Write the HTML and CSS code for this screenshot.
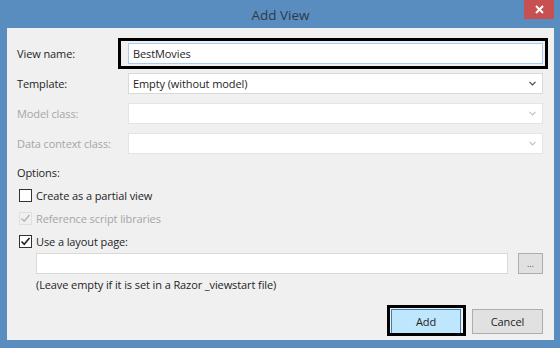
FILE: index.html
```html
<!DOCTYPE html>
<html lang="en">
  <head>
    <meta charset="UTF-8" />
    <title>Add View</title>
    <link rel="stylesheet" href="styles.css">
  </head>
  <body>
    <div class="window">
      <div class="titlebar">
        <span></span>
        <span class="title">Add View</span>
        <span class="close">
          <svg width="9" height="9" viewBox="0 0 9 9">
            <path d="M1 1 L8 8 M8 1 L1 8" stroke="#fff" stroke-width="2" />
          </svg>
        </span>
      </div>

      <div class="content">
        <!-- Main fields -->
        <div class="fields">
          <div class="label">View name:</div>
          <div class="textbox focused marked">BestMovies</div>

          <div class="label">Template:</div>
          <div class="select">
            <span>Empty (without model)</span>
            <svg class="chevron" width="7" height="5" viewBox="0 0 7 5">
              <path d="M0.5 0.8 L3.5 3.8 L6.5 0.8" fill="none" stroke="#444" stroke-width="1.2" />
            </svg>
          </div>

          <div class="label disabled">Model class:</div>
          <div class="select disabled">
            <span></span>
            <svg class="chevron" width="7" height="5" viewBox="0 0 7 5">
              <path d="M0.5 0.8 L3.5 3.8 L6.5 0.8" fill="none" stroke="#c2c2c2" stroke-width="1.2" />
            </svg>
          </div>

          <div class="label disabled">Data context class:</div>
          <div class="select disabled">
            <span></span>
            <svg class="chevron" width="7" height="5" viewBox="0 0 7 5">
              <path d="M0.5 0.8 L3.5 3.8 L6.5 0.8" fill="none" stroke="#c2c2c2" stroke-width="1.2" />
            </svg>
          </div>
        </div>

        <!-- Options -->
        <div class="options">
          <div class="heading">Options:</div>
          <div class="check">
            <span class="box"></span>
            <span>Create as a partial view</span>
          </div>
          <div class="check disabled">
            <span class="box">
              <svg width="11" height="11" viewBox="0 0 11 11">
                <path d="M1.5 5.5 L4.2 8.2 L9.5 2" fill="none" stroke="#b4b4b4" stroke-width="1.5" />
              </svg>
            </span>
            <span>Reference script libraries</span>
          </div>
          <div class="check">
            <span class="box">
              <svg width="11" height="11" viewBox="0 0 11 11">
                <path d="M1.5 5.5 L4.2 8.2 L9.5 2" fill="none" stroke="#222" stroke-width="1.6" />
              </svg>
            </span>
            <span>Use a layout page:</span>
          </div>
        </div>

        <div class="layout-row">
          <div class="textbox wide"></div>
          <div class="button browse">...</div>
        </div>
        <div class="hint">(Leave empty if it is set in a Razor _viewstart file)</div>

        <div class="actions">
          <div class="button primary marked">Add</div>
          <div class="button">Cancel</div>
        </div>
      </div>
    </div>
  </body>
</html>
```

FILE: styles.css
```css
body {
  margin: 0;
  font-family: "Open Sans", "Noto Sans", sans-serif;
  font-size: 11px;
  letter-spacing: -0.1px;
  color: #1e1e1e;
  background: #5a8dbf;
}
.window {
  width: 560px;
  height: 348px;
  box-sizing: border-box;
  padding: 0 6px 8px 7px;
  background: #5a8dbf;
  display: flex;
  flex-direction: column;
}
.titlebar {
  height: 28px;
  display: grid;
  grid-template-columns: 1fr auto 1fr;
  align-items: start;
}
.title {
  font-size: 13.5px;
  letter-spacing: 0;
  color: #2d3a46;
  line-height: 30px;
}
.close {
  justify-self: end;
  width: 30px;
  height: 19px;
  background: #c75050;
  display: flex;
  justify-content: center;
  align-items: center;
}
.content {
  flex: 1;
  background: #f0f0f0;
  padding: 15px 11px 0 10px;
  display: flex;
  flex-direction: column;
}
.fields {
  display: grid;
  grid-template-columns: 111px 415px;
  grid-auto-rows: 21px;
  row-gap: 9px;
  align-items: center;
}
.label.disabled,
.check.disabled {
  color: #a6a6a6;
}
.textbox,
.select {
  height: 21px;
  box-sizing: border-box;
  background: #fff;
  border: 1px solid #d9d9d9;
  display: flex;
  align-items: center;
  padding: 0 4px;
}
.textbox.focused {
  border-color: #a6cdf2;
}
.select {
  justify-content: space-between;
  padding-right: 6px;
}
.select.disabled {
  border-color: #e4e4e4;
}
/* black highlight frames drawn over the screenshot */
.marked {
  position: relative;
}
.marked::after {
  content: "";
  position: absolute;
  top: -6px;
  bottom: -6px;
  left: -11px;
  right: -6px;
  border: 3px solid #000;
}
.options {
  margin-top: 7px;
}
.heading,
.check {
  height: 23px;
  display: flex;
  align-items: center;
}
.check {
  padding-left: 2px;
}
.box {
  width: 13px;
  height: 13px;
  box-sizing: border-box;
  border: 1px solid #333;
  background: #fff;
  margin-right: 4px;
  display: flex;
  justify-content: center;
  align-items: center;
}
.check.disabled .box {
  border-color: #e0e0e0;
  background: #f0f0f0;
}
.layout-row {
  margin-left: 19px;
  display: flex;
  gap: 10px;
}
.textbox.wide {
  width: 472px;
}
.button {
  box-sizing: border-box;
  height: 25px;
  border: 1px solid #adadad;
  background: #e1e1e1;
  display: flex;
  justify-content: center;
  align-items: center;
}
.browse {
  width: 25px;
  height: 21px;
  font-size: 9px;
  color: #555;
}
.hint {
  margin-left: 19px;
  line-height: 22px;
}
.actions {
  margin-top: 13px;
  display: flex;
  justify-content: flex-end;
  gap: 11px;
}
.actions .button {
  width: 71px;
}
.actions .primary {
  width: 70px;
  background: #bee6fd;
  border-color: #3c7fb1;
}
.actions .marked::after {
  top: -5px;
  bottom: -3px;
  left: -5px;
  right: -6px;
}
```
